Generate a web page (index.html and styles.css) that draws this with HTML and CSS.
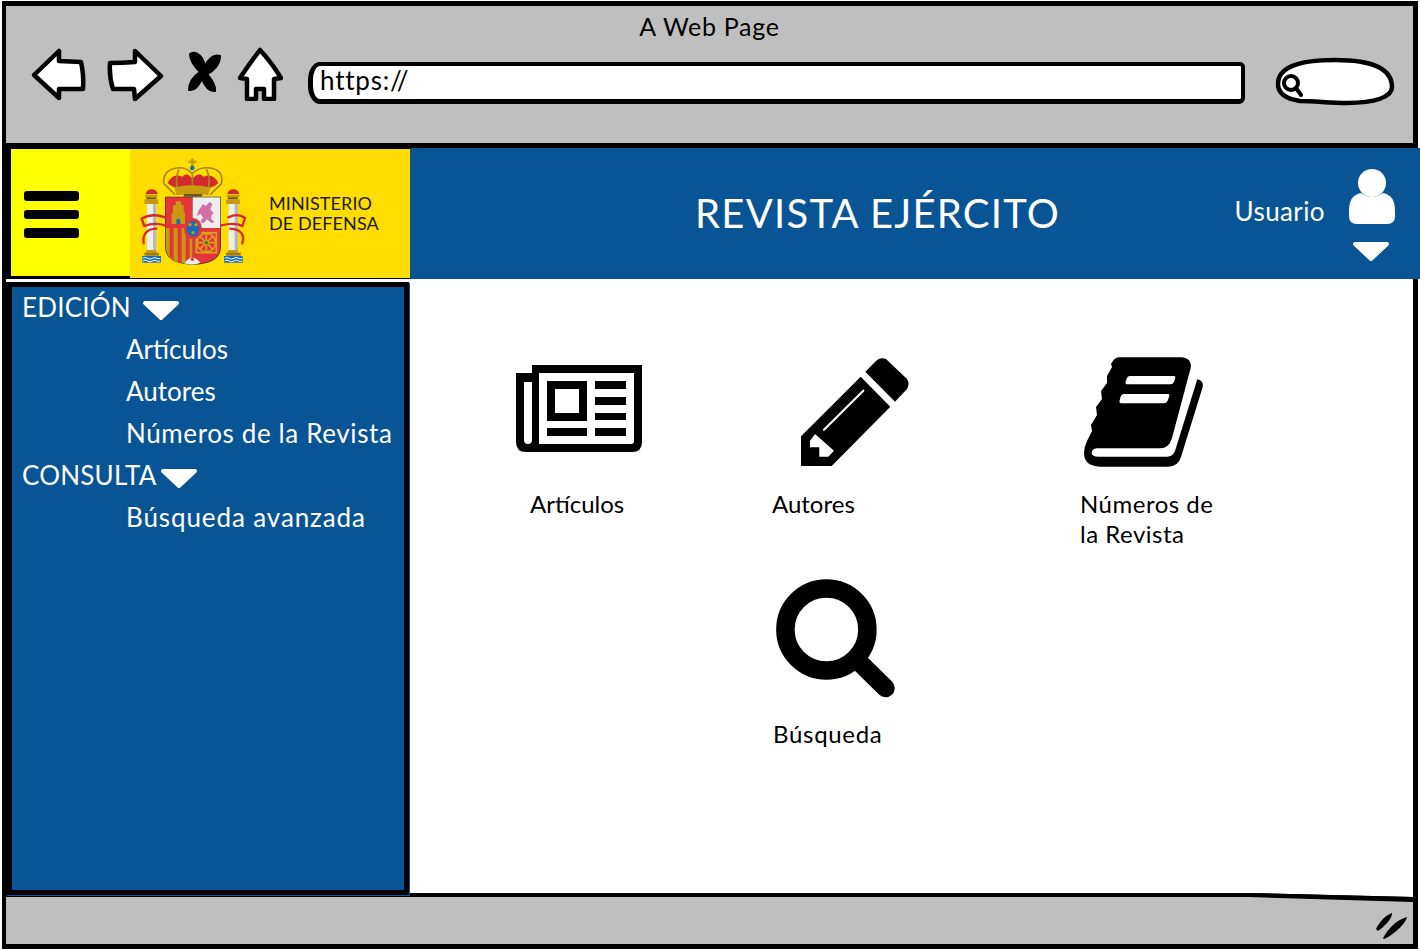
FILE: index.html
```html
<!DOCTYPE html>
<html lang="es">
<head>
<meta charset="utf-8">
<title>A Web Page</title>
<link rel="stylesheet" href="styles.css">
</head>
<body>
<div class="window">
  <section class="toolbar">
    <div class="page-title">A Web Page</div>
    <div class="nav">
      <svg class="nav-icon back" viewBox="0 0 58 54"><path d="M4 28 L29 4 L29 14 L51 15 Q54 28 53 42 L29 42 L29 51 Z" /></svg>
      <svg class="nav-icon forward" viewBox="0 0 58 54"><path d="M4 16 Q16 16 29 15 L29 4 L55 29 L29 52 L28 42 L7 42 Q3 30 4 16 Z" /></svg>
      <svg class="nav-icon stop" viewBox="0 0 34 54"><path class="solid" d="M3 7 C10 3 16 10 18 19 C22 11 27 7 33 9 C33 17 27 24 20 27 C25 33 29 39 28 44 C22 45 18 39 15 32 C11 39 8 44 2 43 C2 35 7 29 13 25 C8 20 3 14 3 7 Z" /></svg>
      <svg class="nav-icon home" viewBox="0 0 46 54"><path d="M23 3 Q35 16 44 31 L37 32 L37 52 L27 52 L27 42 L19 42 L19 52 L10 52 L10 32 L3 31 Q13 16 23 3 Z" /></svg>
      <div class="url">https://</div>
      <svg class="search-field" viewBox="0 0 120 50"><path class="field" d="M3 27 C3 10 25 3 60 3 C95 3 117 10 117 30 C117 40 100 46 72 46 C55 46 40 44 25 44 C12 42 3 37 3 27 Z" /><circle class="glass" cx="16" cy="26" r="7"/><path class="glass" d="M21 31 L26 38" /></svg>
    </div>
  </section>
  <header class="app-header">
    <div class="logo-cell">
      <div class="menu-cell"><span class="bar"></span><span class="bar"></span><span class="bar"></span></div>
      <div class="ministry">
        <svg class="arms" viewBox="0 0 360 345" aria-hidden="true">
          <g class="c-gold"><rect x="168" y="14" width="8" height="26"/><rect x="160" y="20" width="24" height="7"/></g>
          <circle class="c-blue" cx="172" cy="42" r="7"/>
          <path class="c-red" d="M98 88 Q112 56 142 68 Q156 52 172 74 Q190 52 206 68 Q236 56 250 88 Q226 110 172 108 Q122 110 98 88 Z"/>
          <path class="arc" d="M86 88 Q84 48 125 42 Q150 38 172 58 Q195 38 225 42 Q266 48 260 88 M86 88 L120 122 M260 88 L226 122"/>
          <path class="arc" d="M130 118 Q118 75 132 46 M216 118 Q230 75 214 46 M172 58 V112"/>
          <path class="c-gold" d="M118 100 Q172 88 226 100 L220 124 Q172 116 124 124 Z"/>
          <rect class="c-dark" x="146" y="120" width="56" height="8"/>
          <g>
            <path class="c-red" d="M32 120 Q35 106 50 106 Q65 106 68 120 Z"/>
            <rect class="c-gold" x="30" y="122" width="38" height="8"/>
            <rect class="c-dark" x="34" y="130" width="30" height="6"/>
            <rect class="c-gold" x="28" y="136" width="42" height="14"/>
            <rect class="c-white" x="36" y="150" width="28" height="138"/>
            <rect class="c-grey" x="54" y="150" width="10" height="138"/>
            <rect class="c-gold" x="34" y="288" width="30" height="16"/>
            <rect class="c-brown" x="28" y="296" width="44" height="9"/>
            <rect class="c-blue" x="22" y="306" width="56" height="20"/>
            <path class="wave" d="M24 313 Q31 308 38 313 Q45 318 52 313 Q59 308 66 313 Q71 316 76 313 M24 321 Q31 316 38 321 Q45 326 52 321 Q59 316 66 321 Q71 324 76 321"/>
          </g>
          <g transform="translate(245 0)">
            <path class="c-red" d="M32 120 Q35 106 50 106 Q65 106 68 120 Z"/>
            <rect class="c-gold" x="30" y="122" width="38" height="8"/>
            <rect class="c-dark" x="34" y="130" width="30" height="6"/>
            <rect class="c-gold" x="28" y="136" width="42" height="14"/>
            <rect class="c-white" x="36" y="150" width="28" height="138"/>
            <rect class="c-grey" x="54" y="150" width="10" height="138"/>
            <rect class="c-gold" x="34" y="288" width="30" height="16"/>
            <rect class="c-brown" x="28" y="296" width="44" height="9"/>
            <rect class="c-blue" x="22" y="306" width="56" height="20"/>
            <path class="wave" d="M24 313 Q31 308 38 313 Q45 318 52 313 Q59 308 66 313 Q71 316 76 313 M24 321 Q31 316 38 321 Q45 326 52 321 Q59 316 66 321 Q71 324 76 321"/>
          </g>
          <path class="shield-edge" d="M90 128 H258 V278 Q258 330 175 332 Q90 330 90 278 Z"/>
          <rect class="c-red2" x="92" y="130" width="81" height="92"/>
          <rect class="c-white" x="173" y="130" width="83" height="92"/>
          <path class="c-gold" d="M92 222 H173 V330 Q92 330 92 278 Z"/>
          <path class="c-red2" d="M104 222 H116 V318 L104 306 Z M128 222 H140 V328 L128 324 Z M152 222 H164 V330 H152 Z"/>
          <path class="c-red2" d="M173 222 H256 V278 Q256 328 173 330 Z"/>
          <path class="c-gold" d="M130 142 L138 142 L138 154 L146 154 L146 176 L150 176 L150 210 L110 210 L110 176 L114 176 L114 154 L122 154 L122 142 Z"/>
          <path class="c-blue" d="M124 210 V198 Q130 190 136 198 V210 Z"/>
          <path class="c-pink" d="M190 170 L204 150 L212 156 L224 144 L232 150 L226 166 L236 178 L230 182 L228 194 L238 204 L230 208 L216 196 L206 208 L196 204 L204 190 L196 180 L186 186 Z"/>
          <g class="chains"><circle cx="214" cy="266" r="28"/><path d="M186 266 H242 M214 238 V294 M194 246 L234 286 M234 246 L194 286"/><rect x="184" y="236" width="60" height="60"/></g>
          <circle class="c-green" cx="214" cy="266" r="5"/>
          <path class="c-white" d="M148 328 Q172 296 196 326 Q172 336 148 328 Z"/>
          <circle class="c-red2" cx="172" cy="316" r="5"/>
          <ellipse class="c-red2" cx="174" cy="224" rx="27" ry="32"/>
          <ellipse class="c-blue" cx="174" cy="224" rx="19" ry="24"/>
          <g class="c-gold"><circle cx="165" cy="212" r="5"/><circle cx="183" cy="212" r="5"/><circle cx="174" cy="236" r="5"/></g>
          <path class="ribbon" d="M90 190 Q50 176 20 194 L28 216 Q58 204 90 214 M64 224 Q20 226 26 268 M280 190 Q310 176 330 192 L322 216 Q300 204 258 214 M286 224 Q334 228 322 268"/>
        </svg>
        <div class="ministry-name"><span>MINISTERIO</span><span>DE DEFENSA</span></div>
      </div>
    </div>
    <h1 class="app-title">REVISTA EJÉRCITO</h1>
    <div class="user">
      <span class="user-name">Usuario</span>
      <div class="user-icons">
        <svg class="user-icon" viewBox="0 0 46 55"><path d="M12 24 Q0 26 0 42 V47 Q0 55 8 55 H38 Q46 55 46 47 V42 Q46 26 34 24 Q23 32 12 24 Z"/><circle cx="23" cy="14" r="14"/></svg>
        <svg class="tri user-tri" viewBox="0 0 38 21"><polygon points="3,3 35,3 19,18"/></svg>
      </div>
    </div>
  </header>
  <div class="content">
    <nav class="sidebar">
      <div class="group group-first"><span>EDICIÓN</span><svg class="tri edit-tri" viewBox="0 0 38 21"><polygon points="3,3 35,3 19,18"/></svg></div>
      <a class="link">Artículos</a>
      <a class="link">Autores</a>
      <a class="link link-wide">Números de la Revista</a>
      <div class="group"><span>CONSULTA</span><svg class="tri query-tri" viewBox="0 0 38 21"><polygon points="3,3 35,3 19,18"/></svg></div>
      <a class="link link-wider">Búsqueda avanzada</a>
    </nav>
    <main class="tiles">
      <div class="tile">
        <svg class="ico ico-news" viewBox="0 0 126 87">
          <path d="M16 0 H126 V77 Q126 87 116 87 H10 Q0 87 0 77 V8 H16 Z"/>
          <path class="hole" d="M23 8 H118 V76 Q118 79 115 79 H23 Z M8 17 H16 V75 Q16 79 12 79 Q8 79 8 75 Z"/>
          <path fill-rule="evenodd" d="M31 16 H71 V56 H31 Z M39 24 V48 H63 V24 Z"/>
          <path d="M79 16 H110 V24 H79 Z M79 32 H110 V40 H79 Z M79 48 H110 V55 H79 Z M79 63 H110 V71 H79 Z M31 63 H71 V71 H31 Z"/>
        </svg>
        <span class="tile-label label-news">Artículos</span>
      </div>
      <div class="tile">
        <svg class="ico ico-pen" viewBox="0 0 110 110">
          <path d="M65.3 14.7 L77 3 Q81 0 86 2 L107 22 Q110 27 107 32 L95 44.7 Z"/>
          <path d="M1 79.3 L60.7 19.7 L90.3 49.7 L31.7 109 H1 Z"/>
          <path class="hole" d="M10 83.7 L15 77 L34 93.7 L28.3 99.7 H19.3 V90.3 H10 Z"/>
          <path class="hole-line" d="M24 72.7 L63.3 33.7"/>
        </svg>
        <span class="tile-label">Autores</span>
      </div>
      <div class="tile">
        <svg class="ico ico-book" viewBox="0 0 120 110">
          <path d="M34.3 0.3 H97 Q108 1 106.7 11 L88 81 Q85 91.3 76 91.3 H12.7 Q7.7 92 7.7 96.3 Q8 99.7 14.3 99.7 H83 Q89 99.7 91 94 L113.3 22.3 Q120 24 118.7 30 L97 100 Q94 109.7 84 109.7 H16 Q0 109 0 96 Q0 90 3 84 L8 74 L7 68 L13 58 L12 50 L18 42 L17 34 L23 26 L23 19 L28 10 L27 7 Q30 1 34.3 0.3 Z"/>
          <path class="hole" d="M46 19 H90 Q92 19 91 22 L90 25 Q89 27.3 86 27.3 H43 Q41 27.3 41.5 25 L42.5 22 Q43.5 19 46 19 Z M40 37 H84 Q86 37 85 40 L83.5 44 Q82.5 46.3 80 46.3 H37 Q35 46.3 35.5 44 L36.5 40 Q37.5 37 40 37 Z"/>
        </svg>
        <span class="tile-label label-spaced">Números de<br>la Revista</span>
      </div>
      <div class="tile tile-search">
        <svg class="ico ico-search" viewBox="0 0 119 119">
          <circle class="ring" cx="50.4" cy="50.5" r="41"/>
          <path class="ring" d="M80 80 L109.5 109"/>
        </svg>
        <span class="tile-label label-search">Búsqueda</span>
      </div>
    </main>
  </div>
  <footer class="statusbar">
    <svg class="slope" viewBox="0 0 164 10" preserveAspectRatio="none"><polygon class="slope-white" points="0,0 164,0 164,4"/><polygon points="0,0 164,4 164,9 0,4"/></svg>
    <svg class="grip" viewBox="0 0 32 27"><path d="M0 17 C4 9 10 3 16 1 C17 6 8 15 2 19 Z M7 26 C12 17 20 8 31 5 C30 11 18 23 8 27 Z"/></svg>
  </footer>
</div>
</body>
</html>
```
FILE: styles.css
```css
* { box-sizing: border-box; }
html, body { margin: 0; padding: 0; background: #fff; }
body { width: 1420px; height: 950px; overflow: hidden; font-family: Lato, "Noto Sans", sans-serif; color: #000; }

.window {
  width: 1416px;
  height: 948px;
  margin: 1px 2px;
  display: flex;
  flex-direction: column;
  background: #fff;
  border: solid #000;
  border-width: 5px 5px 5px 4px;
}

.toolbar {
  height: 142px;
  flex: none;
  background: #bfbfbf;
  border-bottom: 5px solid #000;
}
.page-title { height: 41px; line-height: 40px; text-align: center; font-size: 25px; letter-spacing: .7px; }
.nav { display: flex; align-items: flex-start; padding-left: 24px; }
.nav-icon { display: block; height: 54px; flex: none; }
.nav-icon path { fill: #fff; stroke: #000; stroke-width: 4.5; stroke-linejoin: round; }
.nav-icon path.solid { fill: #000; stroke: #000; stroke-width: 2; }
.back { width: 58px; margin-right: 18px; }
.forward { width: 58px; margin-right: 23px; }
.stop { width: 34px; margin-right: 16px; }
.home { width: 46px; margin-right: 25px; }
.url {
  width: 937px;
  height: 42px;
  margin-top: 15px;
  margin-right: 30px;
  padding-left: 7px;
  background: #fff;
  border: 4px solid #000;
  border-left-width: 5px;
  border-bottom-width: 5px;
  border-radius: 12px 5px 6px 12px / 18px 5px 6px 18px;
  line-height: 28px;
  font-size: 26px;
  letter-spacing: .8px;
  flex: none;
}
.search-field { width: 120px; height: 50px; margin-top: 10px; flex: none; }
.field { fill: #fff; stroke: #000; stroke-width: 4.5; }
.glass { fill: none; stroke: #000; stroke-width: 4; stroke-linecap: round; }

.app-header {
  height: 131px;
  flex: none;
  margin-right: -7px;
  display: flex;
  align-items: stretch;
  background: #095495;
  color: #fff;
}
.logo-cell { width: 404px; flex: none; display: flex; background: #000; padding: 1px 0 0 5px; }
.menu-cell {
  width: 119px;
  margin-bottom: 3px;
  padding: 42px 13px 0;
  background: #ff0;
  display: flex;
  flex-direction: column;
  gap: 9px;
}
.bar { display: block; width: 55px; height: 9.5px; background: #000; border-radius: 3px; }
.ministry {
  width: 280px;
  margin-bottom: 1px;
  padding-left: 5px;
  background: #fd0;
  display: flex;
  align-items: flex-start;
  color: #1c1c1c;
}
.arms { width: 120px; height: 115px; margin-top: 5px; flex: none; }
.c-gold { fill: #c79a12; }
.c-blue { fill: #1b6cb4; }
.c-red { fill: #d42a2e; }
.c-red2 { fill: #e5353a; }
.c-dark { fill: #6e5a18; }
.c-white { fill: #eeeeee; }
.c-grey { fill: #b8b8b8; }
.c-brown { fill: #9c7c20; }
.c-pink { fill: #d56fa8; }
.c-green { fill: #3d7a2e; }
.arc { fill: none; stroke: #a8861e; stroke-width: 5; }
.wave { fill: none; stroke: #fff; stroke-width: 3; }
.shield-edge { fill: #333; }
.chains { fill: none; stroke: #d8a21a; stroke-width: 5; }
.ribbon { fill: none; stroke: #d42a2e; stroke-width: 7; stroke-linecap: round; }
.ministry-name {
  margin-top: 44px;
  margin-left: 14px;
  display: flex;
  flex-direction: column;
  font-size: 18px;
  line-height: 20px;
  letter-spacing: .1px;
  white-space: nowrap;
}

.app-title { margin: 0 0 0 285px; font-size: 40px; font-weight: 400; line-height: 130px; letter-spacing: 1.25px; white-space: nowrap; }
.user { margin-left: auto; padding-right: 25px; display: flex; align-items: flex-start; }
.user-name { margin-top: 45px; margin-right: 24px; font-size: 26px; line-height: 36px; letter-spacing: .4px; }
.user-icons { width: 46px; padding-top: 21px; }
.user-icon { display: block; width: 46px; height: 55px; fill: #fff; }
.tri { display: block; width: 38px; height: 21px; flex: none; }
.tri polygon { fill: #fff; stroke: #fff; stroke-width: 4; stroke-linejoin: round; }
.user-tri { margin: 17px 0 0 3px; }

.content { height: 614px; flex: none; display: flex; align-items: flex-start; }
.sidebar {
  position: relative;
  z-index: 1;
  width: 403px;
  height: 613px;
  margin-top: 3px;
  flex: none;
  background: #095495;
  border: solid #000;
  border-width: 5px 5px 5px 6px;
  color: #fff;
  box-shadow: 1px 1px 0 #095495;
  font-size: 26px;
  line-height: 42px;
}
.group { display: flex; align-items: center; height: 42px; padding-left: 10px; letter-spacing: .2px; }
.group-first { margin-top: -1px; }
.edit-tri { margin-left: 11px; margin-top: 6px; }
.query-tri { margin-left: 3px; margin-top: 6px; }
.link { display: block; height: 42px; padding-left: 114px; white-space: nowrap; }
.link-wide { letter-spacing: .62px; }
.link-wider { letter-spacing: .9px; }

.tiles {
  flex: 1;
  display: grid;
  grid-template-columns: 256px 308px 1fr;
  grid-template-rows: 193px auto;
  row-gap: 29px;
  padding: 78px 0 0 107px;
}
.tile { display: flex; flex-direction: column; align-items: flex-start; }
.tile-search { grid-column: 2; }
.ico { display: block; flex: none; }
.ico path, .ico circle { fill: #000; }
.ico .hole { fill: #fff; }
.ico .hole-line { fill: none; stroke: #fff; stroke-width: 2.2; stroke-linecap: round; }
.ico .ring { fill: none; stroke: #000; stroke-width: 18.5; stroke-linecap: round; }
.ico-news { width: 126px; height: 87px; margin-top: 8px; margin-bottom: 37px; }
.ico-pen { width: 110px; height: 110px; margin-left: 28px; margin-bottom: 22px; }
.ico-book { width: 120px; height: 110px; margin-left: 4px; margin-bottom: 22px; }
.ico-search { width: 119px; height: 119px; margin-left: 4px; margin-bottom: 21px; }
.tile-label { font-size: 24px; line-height: 30px; white-space: nowrap; }
.label-news { margin-left: 14px; }
.label-spaced { letter-spacing: .5px; }
.label-search { margin-left: 1px; letter-spacing: .7px; }

.statusbar {
  position: relative;
  height: 51px;
  flex: none;
  background: #bfbfbf;
  border-top: 4px solid #000;
  display: flex;
  justify-content: flex-end;
}
.slope { position: absolute; right: 0; top: -4px; width: 164px; height: 10px; fill: #000; }
.slope-white { fill: #fff; }
.grip { width: 32px; height: 27px; margin: 15px 5px 0 0; fill: #000; }
```
